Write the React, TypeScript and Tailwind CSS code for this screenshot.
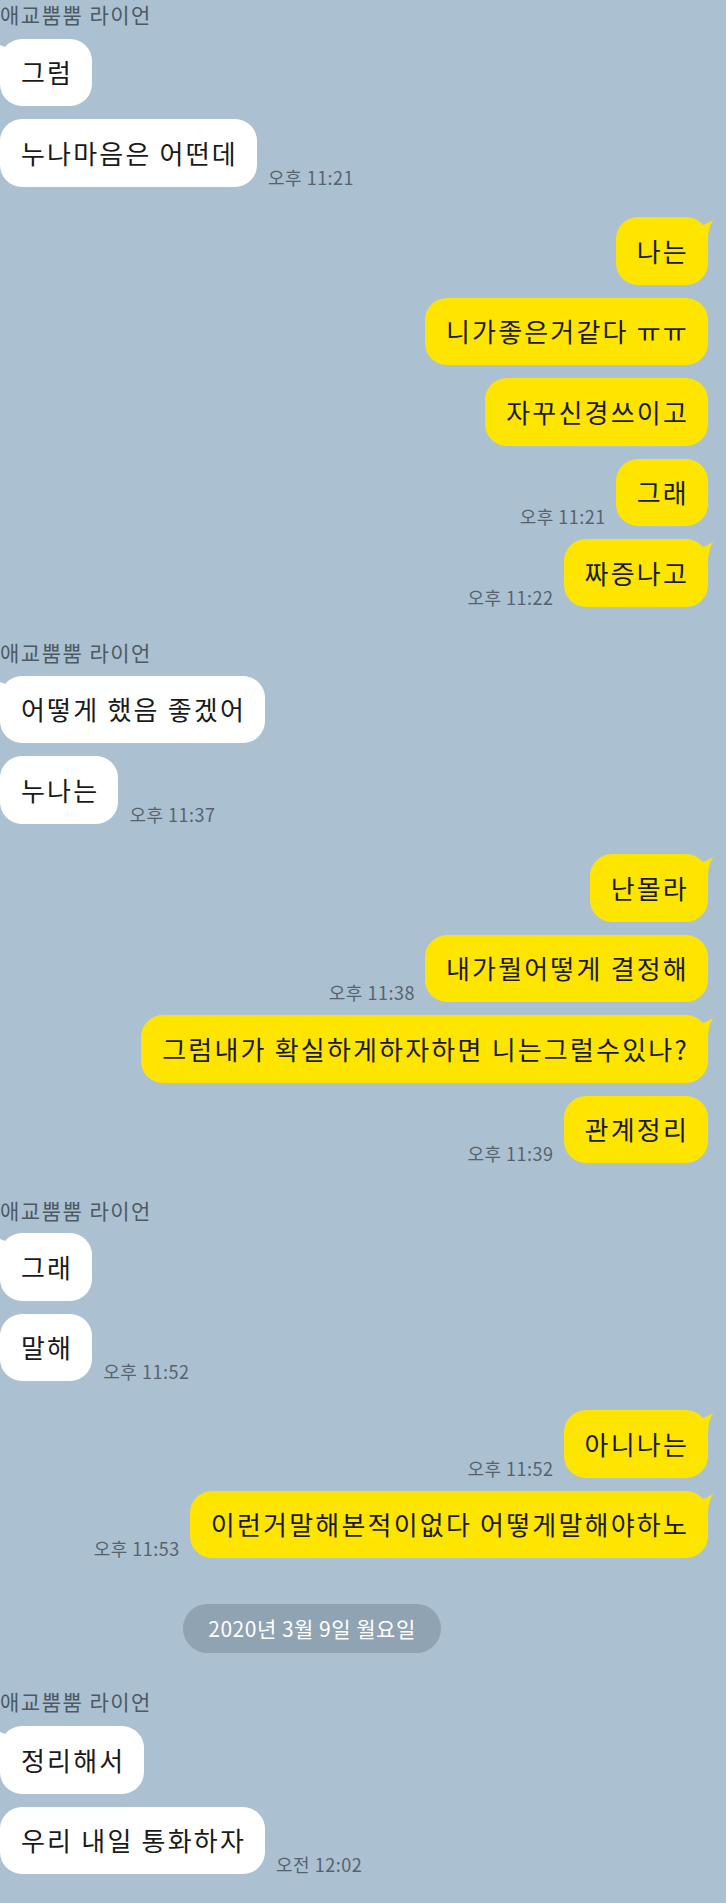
import React from "react";

type Msg = { text: string; time?: string; tail?: boolean; mt: string };

function Tail({ color, side }: { color: string; side: "left" | "right" }) {
  return (
    <svg
      width="16"
      height="24"
      viewBox="0 0 16 24"
      className={
        side === "right"
          ? "absolute top-0 right-[-6px]"
          : "absolute top-0 left-[-6px] -scale-x-100"
      }
    >
      <path d="M1 9 Q8 7.5 15.5 3 C12.5 7 10.2 12 10 23 L1 23 Z" fill={color} />
    </svg>
  );
}

function Left({ m }: { m: Msg }) {
  return (
    <div className={`flex items-end gap-[11px] ${m.mt}`}>
      <div className="relative rounded-[22px] bg-white pl-[21px] pr-[19px] py-[18.75px] text-[26px] leading-[30px] tracking-[2.2px] text-[#1a1a1a] whitespace-nowrap">
        {m.tail && <Tail color="#ffffff" side="left" />}
        <span className="relative">{m.text}</span>
      </div>
      {m.time && (
        <div className="text-[18px] leading-[20px] tracking-[0.5px] text-[#56636f] whitespace-nowrap">{m.time}</div>
      )}
    </div>
  );
}

function Right({ m }: { m: Msg }) {
  return (
    <div className={`flex items-end justify-end gap-[10px] pr-[18px] ${m.mt}`}>
      {m.time && (
        <div className="text-[18px] leading-[20px] tracking-[0.5px] text-[#56636f] whitespace-nowrap">{m.time}</div>
      )}
      <div className="relative rounded-[22px] bg-[#fee500] pl-[21px] pr-[19px] py-[18.75px] text-[26px] leading-[30px] tracking-[2.2px] text-[#1a1a1a] whitespace-nowrap">
        {m.tail && <Tail color="#fee500" side="right" />}
        <span className="relative">{m.text}</span>
      </div>
    </div>
  );
}

function Name({ mt }: { mt: string }) {
  return (
    <div className={`h-[24px] text-[21px] leading-[24px] tracking-[1.5px] text-[#4d5965] whitespace-nowrap ${mt}`}>
      애교뿜뿜 라이언
    </div>
  );
}

export default function App() {
  return (
    <div className="w-[726px] h-[1903px] overflow-hidden bg-[#abc1d1] font-['Noto_Sans_CJK_KR','Noto_Sans',sans-serif] pt-[2px] flex flex-col">
      <Name mt="" />
      <Left m={{ text: "그럼", tail: true, mt: "mt-[12.5px]" }} />
      <Left m={{ text: "누나마음은 어떤데", time: "오후 11:21", mt: "mt-[13px]" }} />

      <Right m={{ text: "나는", tail: true, mt: "mt-[30.5px]" }} />
      <Right m={{ text: "니가좋은거같다 ㅠㅠ", mt: "mt-[13px]" }} />
      <Right m={{ text: "자꾸신경쓰이고", mt: "mt-[13px]" }} />
      <Right m={{ text: "그래", time: "오후 11:21", mt: "mt-[13px]" }} />
      <Right m={{ text: "짜증나고", time: "오후 11:22", tail: true, mt: "mt-[13px]" }} />

      <Name mt="mt-[33.5px]" />
      <Left m={{ text: "어떻게 했음 좋겠어", tail: true, mt: "mt-[11.5px]" }} />
      <Left m={{ text: "누나는", time: "오후 11:37", mt: "mt-[13px]" }} />

      <Right m={{ text: "난몰라", tail: true, mt: "mt-[30.5px]" }} />
      <Right m={{ text: "내가뭘어떻게 결정해", time: "오후 11:38", mt: "mt-[13px]" }} />
      <Right m={{ text: "그럼내가 확실하게하자하면 니는그럴수있나?", tail: true, mt: "mt-[13px]" }} />
      <Right m={{ text: "관계정리", time: "오후 11:39", mt: "mt-[13px]" }} />

      <Name mt="mt-[35px]" />
      <Left m={{ text: "그래", tail: true, mt: "mt-[11px]" }} />
      <Left m={{ text: "말해", time: "오후 11:52", mt: "mt-[13px]" }} />

      <Right m={{ text: "아니나는", time: "오후 11:52", tail: true, mt: "mt-[29px]" }} />
      <Right m={{ text: "이런거말해본적이없다 어떻게말해야하노", time: "오후 11:53", tail: true, mt: "mt-[13px]" }} />

      <div className="mt-[46px] ml-[183px] flex h-[49px] w-[258px] items-center justify-center rounded-full bg-[#90a3b3] text-[21px] tracking-[0.5px] text-white whitespace-nowrap">
        2020년 3월 9일 월요일
      </div>

      <Name mt="mt-[36px]" />
      <Left m={{ text: "정리해서", tail: true, mt: "mt-[13px]" }} />
      <Left m={{ text: "우리 내일 통화하자", time: "오전 12:02", mt: "mt-[13px]" }} />
    </div>
  );
}
